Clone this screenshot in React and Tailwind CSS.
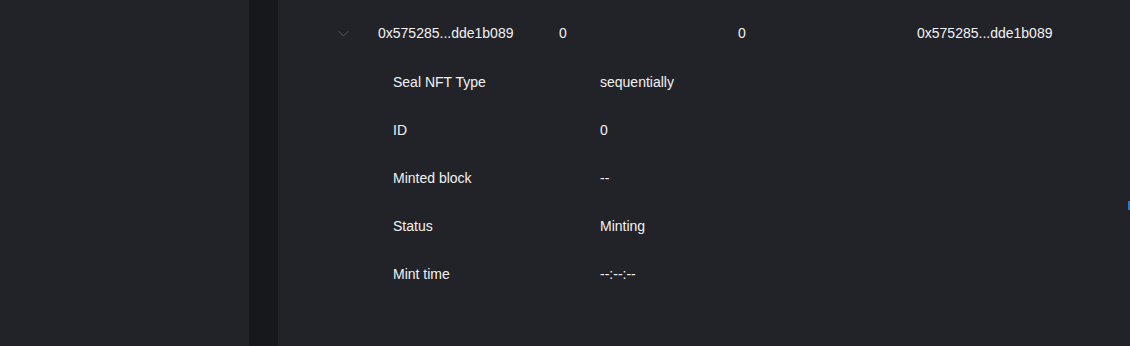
import React from 'react';

const details = [
    { label: 'Seal NFT Type', value: 'sequentially' },
    { label: 'ID', value: '0' },
    { label: 'Minted block', value: '--' },
    { label: 'Status', value: 'Minting' },
    { label: 'Mint time', value: '--:--:--' },
];

export default function App() {
    return (
        <div className="flex h-[346px] w-[1130px] overflow-hidden bg-[#222328] text-sm text-[#f2f2f2] font-['Liberation_Sans',Arial,sans-serif]">
            {/* Left sidebar */}
            <div className="w-[249px] shrink-0 bg-[#222328]"></div>
            <div className="w-[29px] shrink-0 bg-[#17181b]"></div>

            {/* Main panel */}
            <div className="relative flex-1 bg-[#222328]">
                {/* Expanded row header */}
                <div className="flex h-[58px] items-center pt-[8px]">
                    <div className="w-[100px] shrink-0 pl-[60px]">
                        <svg width="11" height="7" viewBox="0 0 11 7" fill="none">
                            <path d="M0.5 1L5.5 6L10.5 1" stroke="#55565c" strokeWidth="1" />
                        </svg>
                    </div>
                    <div className="w-[181px] shrink-0">0x575285...dde1b089</div>
                    <div className="w-[179px] shrink-0">0</div>
                    <div className="w-[179px] shrink-0">0</div>
                    <div>0x575285...dde1b089</div>
                </div>

                {/* Details */}
                <div className="pl-[115px]">
                    {details.map((d) => (
                        <div key={d.label} className="flex h-[48px] items-center">
                            <div className="w-[207px] shrink-0">{d.label}</div>
                            <div>{d.value}</div>
                        </div>
                    ))}
                </div>

                <div className="absolute right-0 top-[201px] h-[9px] w-[2px] bg-[#1e7be0]"></div>
            </div>
        </div>
    );
}
